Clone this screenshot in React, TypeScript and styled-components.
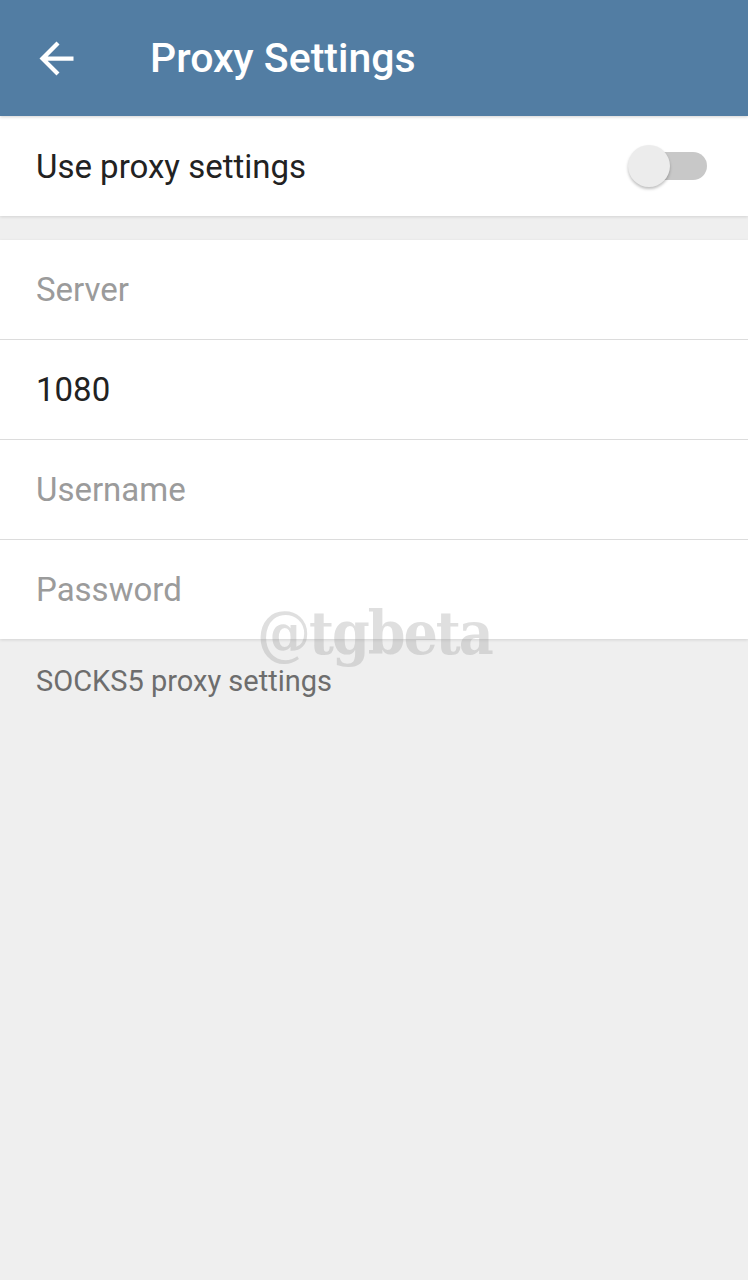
import styled, { createGlobalStyle } from 'styled-components';

const GlobalStyle = createGlobalStyle`
	html, body {
		margin: 0;
		padding: 0;
		background: #efefef;
		font-family: Roboto, 'Noto Sans', sans-serif;
	}
`;

const Screen = styled.div`
	position: relative;
	width: 748px;
	min-height: 1280px;
	background: #efefef;
	overflow: hidden;
`;

const Header = styled.header`
	display: flex;
	align-items: center;
	height: 116px;
	background: #527da3;
	color: #ffffff;
	position: relative;
	z-index: 2;
	box-shadow: 0 1px 3px rgba(0, 0, 0, 0.18);
`;

const BackButton = styled.div`
	display: flex;
	align-items: center;
	justify-content: center;
	width: 51px;
	height: 51px;
	margin-left: 31px;
	margin-right: 68px;
`;

const Title = styled.h1`
	margin: 0;
	font-size: 41px;
	font-weight: 500;
`;

const Card = styled.section`
	display: flex;
	flex-direction: column;
	background: #ffffff;
	box-shadow: 0 1px 3px rgba(0, 0, 0, 0.12);
`;

const Row = styled.div<{ $divider?: boolean; $tall?: boolean }>`
	display: flex;
	align-items: center;
	justify-content: space-between;
	height: ${(p) => (p.$tall ? '100px' : '99px')};
	padding: 0 36px;
	border-bottom: ${(p) => (p.$divider ? '1px solid #dcdcdc' : 'none')};
`;

const Label = styled.span<{ $muted?: boolean }>`
	font-size: 33px;
	color: ${(p) => (p.$muted ? '#9b9b9b' : '#222222')};
`;

const Gap = styled.div`
	height: 24px;
`;

const Track = styled.div`
	position: relative;
	width: 72px;
	height: 28px;
	margin-right: 5px;
	border-radius: 14px;
	background: #c8c8c8;
`;

const Thumb = styled.div`
	position: absolute;
	left: -7px;
	top: -7px;
	width: 42px;
	height: 42px;
	border-radius: 50%;
	background: #ececec;
	box-shadow: 0 2px 3px rgba(0, 0, 0, 0.25);
`;

const Hint = styled.p`
	margin: 0;
	padding: 25px 36px;
	font-size: 29px;
	color: #6d6d6d;
`;

// watermark sits over the list, so it is placed absolutely
const Watermark = styled.div`
	position: absolute;
	left: 257px;
	top: 598px;
	font-family: 'DejaVu Serif Condensed', 'DejaVu Serif', serif;
	font-weight: bold;
	font-size: 60px;
	color: rgba(150, 150, 150, 0.3);
	letter-spacing: -2px;
	pointer-events: none;
`;

const fields = [
	{ text: 'Server', muted: true },
	{ text: '1080', muted: false },
	{ text: 'Username', muted: true },
	{ text: 'Password', muted: true },
];

const App = () => {
	return (
		<Screen>
			<GlobalStyle />
			<Header>
				<BackButton>
					<svg width='51' height='51' viewBox='0 0 24 24' fill='#ffffff'>
						<path d='M20 11H7.83l5.59-5.59L12 4l-8 8 8 8 1.41-1.41L7.83 13H20v-2z' />
					</svg>
				</BackButton>
				<Title>Proxy Settings</Title>
			</Header>
			<Card>
				<Row $tall>
					<Label>Use proxy settings</Label>
					<Track>
						<Thumb />
					</Track>
				</Row>
			</Card>
			<Gap />
			<Card>
				{fields.map((f, i) => (
					<Row key={f.text} $divider={i < fields.length - 1}>
						<Label $muted={f.muted}>{f.text}</Label>
					</Row>
				))}
			</Card>
			<Hint>SOCKS5 proxy settings</Hint>
			<Watermark>@tgbeta</Watermark>
		</Screen>
	);
};

export default App;
